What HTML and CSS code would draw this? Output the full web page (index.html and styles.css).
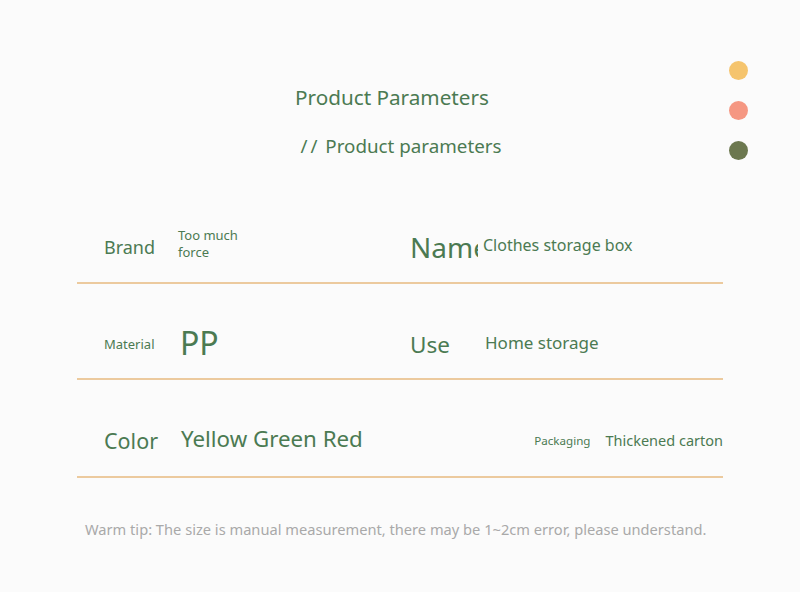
FILE: index.html
```html
<!DOCTYPE html>
<html lang="en">
<head>
	<meta charset="UTF-8">
	<title>Product Parameters</title>
	<link rel="stylesheet" href="styles.css">
</head>
<body>
	<div class="page">
		<div class="dots">
			<span class="dot dot-yellow"></span>
			<span class="dot dot-red"></span>
			<span class="dot dot-olive"></span>
		</div>
		<div class="heading">
			<h1 class="title">Product Parameters</h1>
			<h2 class="subtitle"><span class="slashes">//</span> Product parameters</h2>
		</div>
		<div class="params">
			<div class="row row-first">
				<div class="cell cell-left">
					<span class="label label-brand">Brand</span>
					<span class="value value-brand">Too much force</span>
				</div>
				<div class="cell cell-right">
					<span class="label label-name">Name</span>
					<span class="value value-name">Clothes storage box</span>
				</div>
			</div>
			<div class="row">
				<div class="cell cell-left">
					<span class="label label-material">Material</span>
					<span class="value value-pp">PP</span>
				</div>
				<div class="cell cell-right">
					<span class="label label-use">Use</span>
					<span class="value value-use">Home storage</span>
				</div>
			</div>
			<div class="row row-last">
				<div class="cell cell-left">
					<span class="label label-color">Color</span>
					<span class="value value-color">Yellow Green Red</span>
				</div>
				<div class="cell cell-right cell-end">
					<span class="label label-pack">Packaging</span>
					<span class="value value-pack">Thickened carton</span>
				</div>
			</div>
		</div>
		<p class="tip">Warm tip: The size is manual measurement, there may be 1~2cm error, please understand.</p>
	</div>
</body>
</html>
```

FILE: styles.css
```css
* {
	box-sizing: border-box;
}

body {
	margin: 0;
	font-family: 'Noto Sans', 'Open Sans', sans-serif;
	background-color: #fbfbfb;
	color: #4b7a52;
}

.page {
	position: relative;
	width: 800px;
	height: 592px;
	padding: 0 77px;
}

.dots {
	position: absolute;
	top: 61px;
	left: 729px;
	display: flex;
	flex-direction: column;
	gap: 21px;
}

.dot {
	display: block;
	width: 19px;
	height: 19px;
	border-radius: 50%;
}

.dot-yellow { background-color: #f5c46d; }
.dot-red { background-color: #f59782; }
.dot-olive { background-color: #6c784f; }

.heading {
	padding-top: 82px;
	text-align: center;
	padding-right: 16px;
}

.title {
	margin: 0;
	font-size: 20.7px;
	font-weight: 400;
	line-height: 30px;
}

.subtitle {
	margin: 19px 0 0;
	font-size: 18.8px;
	font-weight: 400;
	line-height: 30px;
	padding-left: 18px;
}

.slashes {
	letter-spacing: 3px;
}

.params {
	margin-top: 26px;
}

.row {
	display: flex;
	height: 96px;
	padding-top: 24px;
	border-bottom: 2px solid #ecca9e;
}

.row-first {
	height: 97px;
}

.row-last {
	height: 98px;
}

.cell {
	width: 50%;
	height: 72px;
	display: flex;
	align-items: center;
}

.cell-left {
	padding-left: 27px;
}

.cell-right {
	padding-left: 10px;
}

.cell-end {
	justify-content: flex-end;
	padding-left: 0;
}

.label {
	flex: none;
	width: 73px;
	white-space: nowrap;
	overflow: hidden;
}

.label-brand { font-size: 18px; }
.label-name { font-size: 28px; width: 68px; margin-right: 4px; }
.label-material { font-size: 13px; }
.label-use { font-size: 22.5px; }
.label-color { font-size: 21.5px; width: 77px; }
.label-pack { font-size: 11.6px; width: auto; margin-right: 15px; }

.value-brand {
	font-size: 13px;
	width: 70px;
	line-height: 17px;
	margin-top: -6px;
	margin-left: 1px;
}

.value-name { font-size: 16px; margin-top: -4px; margin-left: 1px; }
.value-pp { font-size: 32px; margin-left: 3px; margin-top: -4px; }
.value-use { font-size: 17px; margin-left: 2px; margin-top: -4px; }
.value-color { font-size: 22.3px; margin-left: 0; margin-top: -4px; }
.value-pack { font-size: 14.5px; }

.tip {
	margin: 41px 0 0 8px;
	font-size: 14.65px;
	color: #a9a9a9;
	white-space: nowrap;
}
```
